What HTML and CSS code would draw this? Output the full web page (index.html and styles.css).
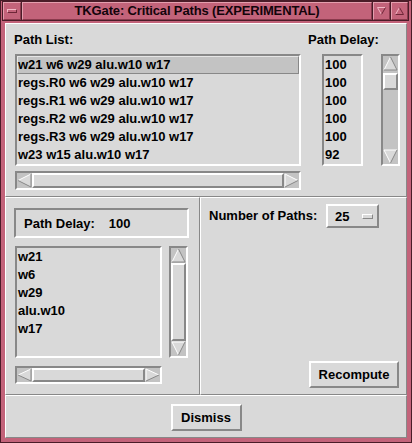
FILE: index.html
```html
<!DOCTYPE html>
<html>
<head>
<meta charset="utf-8">
<title>TKGate: Critical Paths</title>
<link rel="stylesheet" href="styles.css">
</head>
<body>
<div class="win">
  <div class="titlebar">
    <div class="tb-btn tb-left"><span class="tb-bar"></span></div>
    <div class="tb-title">TKGate: Critical Paths (EXPERIMENTAL)</div>
    <div class="tb-btn tb-right">
      <svg width="9" height="8" viewBox="0 0 9 8"><polyline points="0.5,0.5 8.5,0.5" stroke="#f2b9c6" fill="none"/><polyline points="0.5,0.5 4.5,7.5" stroke="#f2b9c6" fill="none"/><polyline points="8.5,0.5 4.5,7.5" stroke="#6e2637" fill="none"/></svg>
    </div>
    <div class="tb-btn tb-right">
      <svg width="9" height="8" viewBox="0 0 9 8"><polyline points="4.5,0.5 0.5,7.5" stroke="#f2b9c6" fill="none"/><polyline points="4.5,0.5 8.5,7.5 0.5,7.5" stroke="#6e2637" fill="none"/></svg>
    </div>
  </div>
  <div class="client">
    <div class="sec sec-top">
      <div class="col-list">
        <div class="lbl lbl-list">Path List:</div>
        <div class="listbox lb-paths">
          <div class="row sel">w21 w6 w29 alu.w10 w17</div>
          <div class="row">regs.R0 w6 w29 alu.w10 w17</div>
          <div class="row">regs.R1 w6 w29 alu.w10 w17</div>
          <div class="row">regs.R2 w6 w29 alu.w10 w17</div>
          <div class="row">regs.R3 w6 w29 alu.w10 w17</div>
          <div class="row">w23 w15 alu.w10 w17</div>
        </div>
        <div class="hscroll hs-top">
          <svg class="arr" width="15" height="15" viewBox="0 0 15 15"><polygon points="1,7.5 14,1 14,14" fill="#d9d9d9"/><polyline points="1,7.5 14,1" stroke="#fff" fill="none"/><polyline points="14,1 14,14 1,7.5" stroke="#888" fill="none"/></svg>
          <div class="slider"></div>
          <svg class="arr" width="15" height="15" viewBox="0 0 15 15"><polygon points="14,7.5 1,1 1,14" fill="#d9d9d9"/><polyline points="1,14 1,1 14,7.5" stroke="#fff" fill="none"/><polyline points="14,7.5 1,14" stroke="#888" fill="none"/></svg>
        </div>
      </div>
      <div class="col-delay">
        <div class="lbl">Path Delay:</div>
        <div class="delay-row">
          <div class="listbox lb-delays">
            <div class="row">100</div>
            <div class="row">100</div>
            <div class="row">100</div>
            <div class="row">100</div>
            <div class="row">100</div>
            <div class="row">92</div>
          </div>
          <div class="vscroll vs-top">
            <svg class="arr" width="15" height="15" viewBox="0 0 15 15"><polygon points="7.5,1 1,14 14,14" fill="#d9d9d9"/><polyline points="1,14 7.5,1" stroke="#fff" fill="none"/><polyline points="7.5,1 14,14 1,14" stroke="#888" fill="none"/></svg>
            <div class="slider slider-small"></div>
            <div class="trough"></div>
            <svg class="arr" width="15" height="15" viewBox="0 0 15 15"><polygon points="7.5,14 1,1 14,1" fill="#d9d9d9"/><polyline points="7.5,14 1,1 14,1" stroke="#fff" fill="none"/><polyline points="14,1 7.5,14" stroke="#888" fill="none"/></svg>
          </div>
        </div>
      </div>
    </div>
    <div class="mid">
      <div class="sec sec-left">
        <div class="delay-box"><span>Path Delay:</span><span class="dval">100</span></div>
        <div class="path-row">
          <div class="listbox lb-nodes">
            <div class="row">w21</div>
            <div class="row">w6</div>
            <div class="row">w29</div>
            <div class="row">alu.w10</div>
            <div class="row">w17</div>
          </div>
          <div class="vscroll vs-left">
            <svg class="arr" width="15" height="15" viewBox="0 0 15 15"><polygon points="7.5,1 1,14 14,14" fill="#d9d9d9"/><polyline points="1,14 7.5,1" stroke="#fff" fill="none"/><polyline points="7.5,1 14,14 1,14" stroke="#888" fill="none"/></svg>
            <div class="slider"></div>
            <svg class="arr" width="15" height="15" viewBox="0 0 15 15"><polygon points="7.5,14 1,1 14,1" fill="#d9d9d9"/><polyline points="7.5,14 1,1 14,1" stroke="#fff" fill="none"/><polyline points="14,1 7.5,14" stroke="#888" fill="none"/></svg>
          </div>
        </div>
        <div class="hscroll hs-left">
          <svg class="arr" width="15" height="14" viewBox="0 0 15 14"><polygon points="1,7 14,1 14,13" fill="#d9d9d9"/><polyline points="1,7 14,1" stroke="#fff" fill="none"/><polyline points="14,1 14,13 1,7" stroke="#888" fill="none"/></svg>
          <div class="slider"></div>
          <svg class="arr" width="15" height="14" viewBox="0 0 15 14"><polygon points="14,7 1,1 1,13" fill="#d9d9d9"/><polyline points="1,13 1,1 14,7" stroke="#fff" fill="none"/><polyline points="14,7 1,13" stroke="#888" fill="none"/></svg>
        </div>
      </div>
      <div class="sec sec-right">
        <div class="np-row">
          <span class="lbl np-lbl">Number of Paths:</span>
          <div class="menubtn"><span>25</span><span class="ind"></span></div>
        </div>
        <button class="btn btn-recompute">Recompute</button>
      </div>
    </div>
    <div class="sec sec-bottom">
      <button class="btn btn-dismiss">Dismiss</button>
    </div>
  </div>
</div>
</body>
</html>
```

FILE: styles.css
```css
* { box-sizing: border-box; }
html, body { margin: 0; padding: 0; background: #c3637a; }
body { font-family: "Liberation Sans", Arial, sans-serif; font-weight: bold; font-size: 13px; color: #000; }

.win {
  width: 412px; height: 443px;
  border: 1px solid #4a1c28;
  background: #c3637a;
  display: flex; flex-direction: column;
}

.titlebar {
  height: 20px;
  margin: 0 2px 2px 1px;
  display: flex;
  gap: 1px;
  padding: 1px;
  background: #4a1c28;
}
.tb-btn, .tb-title {
  background: #c3637a;
  border: 1px solid;
  border-color: #e49fae #8a3a4d #8a3a4d #e49fae;
  display: flex; align-items: center; justify-content: center;
}
.tb-left { width: 18px; }
.tb-right { width: 17px; }
.tb-title { flex: 1; font-size: 13px; letter-spacing: -0.15px; color: #12040a; line-height: 16px; }
.tb-bar {
  width: 10px; height: 4px;
  border-top: 1px solid #f2b9c6; border-left: 1px solid #f2b9c6;
  border-bottom: 1px solid #6e2637; border-right: 1px solid #6e2637;
}

.client {
  width: 402px; height: 415px;
  margin-left: 4px;
  background: #d9d9d9;
  display: flex; flex-direction: column;
}

.sec {
  border: 1px solid;
  border-color: #fff #888 #888 #fff;
}

.sunken { }

.sec-top {
  height: 174px;
  display: flex;
  padding: 8px 0 0 9px;
}
.col-list { width: 286px; display: flex; flex-direction: column; }
.lbl { height: 16px; line-height: 16px; white-space: nowrap; }
.lbl-list { margin-left: -1px; }

.listbox {
  border: 2px solid;
  border-color: #888 #fff #fff #888;
  background: #d9d9d9;
  height: 112px;
  overflow: hidden;
}
.row { height: 18px; line-height: 18px; padding-left: 1px; white-space: nowrap; }
.row.sel {
  background: #c3c3c3;
  border: 1px solid;
  border-color: #e6e6e6 #888 #888 #e6e6e6;
  line-height: 16px;
  padding-left: 0;
}
.lb-paths { margin-top: 6px; width: 286px; }

.hscroll, .vscroll {
  border: 2px solid;
  border-color: #888 #fff #fff #888;
  background: #c3c3c3;
  display: flex;
}
.vscroll { flex-direction: column; width: 19px; height: 112px; }
.hscroll .slider, .vscroll .slider {
  flex: 1;
  background: #d9d9d9;
  border: 2px solid;
  border-color: #fff #888 #888 #fff;
}
.vscroll .slider-small { flex: 0 0 17px; margin-top: 2px; }
.trough { flex: 1; }
.arr { display: block; flex: none; }

.hs-top { margin-top: 5px; height: 19px; }

.col-delay { margin-left: 7px; display: flex; flex-direction: column; }
.delay-row { display: flex; margin-top: 6px; }
.lb-delays { width: 41px; margin-left: 14px; }
.vs-top { margin-left: 18px; }

.mid { display: flex; height: 198px; }
.sec-left {
  width: 195px;
  padding: 10px 0 0 8px;
  display: flex; flex-direction: column;
}
.delay-box {
  width: 175px; height: 30px;
  border: 2px solid;
  border-color: #888 #fff #fff #888;
  display: flex; align-items: center;
  padding-left: 8px;
}
.dval { margin-left: 14px; }
.path-row { display: flex; margin-top: 8px; margin-left: 1px; }
.lb-nodes { width: 147px; }
.vs-left { margin-left: 7px; }
.hs-left { margin-top: 8px; margin-left: 1px; width: 147px; height: 18px; }

.sec-right {
  flex: 1;
  display: flex; flex-direction: column;
  padding: 6px 7px 6px 8px;
}
.np-row { display: flex; align-items: center; }
.np-lbl { width: 117px; }
.menubtn {
  width: 53px; height: 24px;
  border: 2px solid;
  border-color: #fff #888 #888 #fff;
  display: flex; align-items: center;
  padding-left: 7px;
}
.ind {
  width: 11px; height: 5px;
  margin-left: 13px;
  background: #d9d9d9;
  border: 1px solid;
  border-color: #fff #888 #888 #fff;
}

.btn {
  font: inherit;
  color: #000;
  background: #d9d9d9;
  border: 2px solid;
  border-color: #fff #888 #888 #fff;
  height: 27px;
  padding: 0;
  margin: 0;
}
.btn-recompute { width: 90px; margin-top: auto; align-self: flex-end; }

.sec-bottom {
  height: 43px;
  display: flex; align-items: center; justify-content: center;
  padding-top: 1px;
}
.btn-dismiss { width: 71px; }
```
